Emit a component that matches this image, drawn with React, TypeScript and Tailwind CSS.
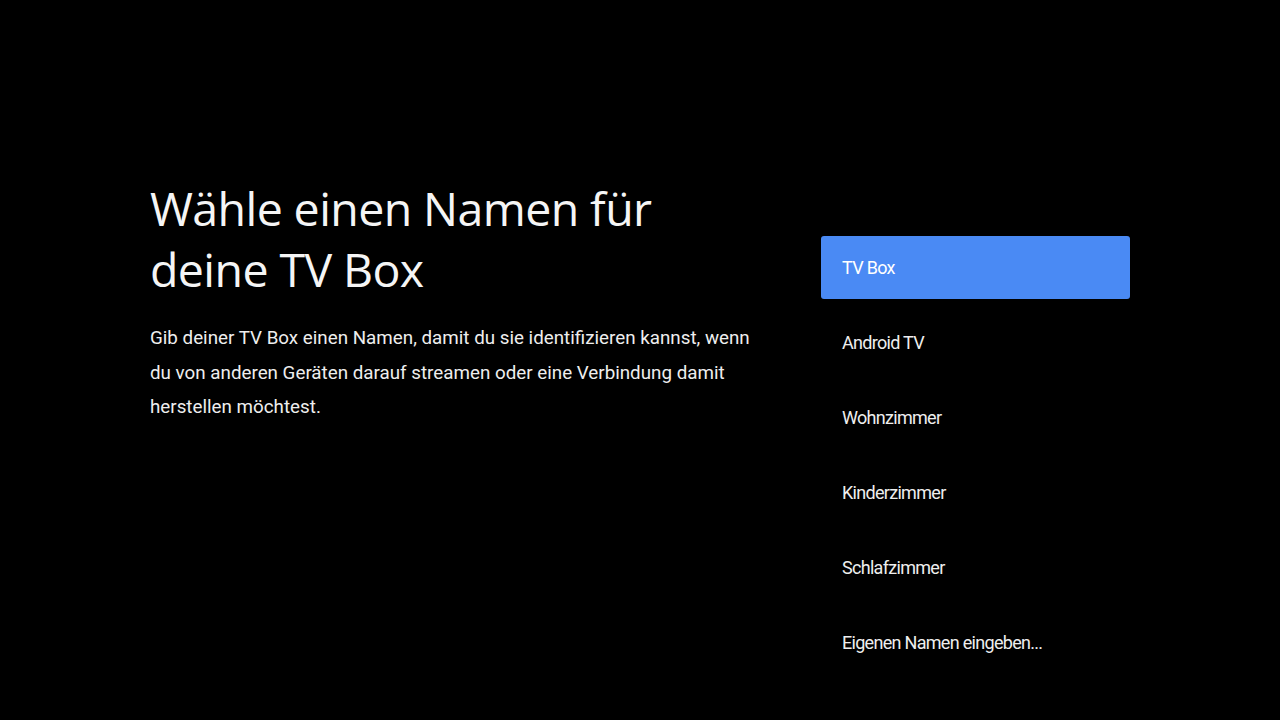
const names = [
  "TV Box",
  "Android TV",
  "Wohnzimmer",
  "Kinderzimmer",
  "Schlafzimmer",
  "Eigenen Namen eingeben...",
];

export default function App() {
  const selected = 0;

  return (
    <div className="w-[1280px] h-[720px] bg-black text-white flex px-[150px] overflow-hidden">
      {/* Left: title and description */}
      <div className="w-[610px] pt-[178px]">
        <h1 className="text-[46.5px] leading-[61px] font-normal font-['Open_Sans','Noto_Sans',sans-serif] tracking-[-0.6px] text-[#f5f5f5]">
          Wähle einen Namen für
          <br />
          deine TV Box
        </h1>
        <p className="mt-[21px] w-[608px] text-[18.8px] leading-[34.5px] font-['Roboto',sans-serif] text-[#eeeeee] tracking-[0px]">
          Gib deiner TV Box einen Namen, damit du sie identifizieren kannst, wenn
          du von anderen Geräten darauf streamen oder eine Verbindung damit
          herstellen möchtest.
        </p>
      </div>

      {/* Right: name options */}
      <div className="ml-auto w-[309px] pt-[236px] flex flex-col gap-[12px]">
        {names.map((name, i) => (
          <div
            key={name}
            className={`h-[63px] flex items-center px-[21px] rounded-[3px] text-[18px] font-['Roboto',sans-serif] tracking-[-0.7px] ${
              i === selected ? "bg-[#4a8af4] text-white" : "text-[#eeeeee]"
            }`}
          >
            {name}
          </div>
        ))}
      </div>
    </div>
  );
}
